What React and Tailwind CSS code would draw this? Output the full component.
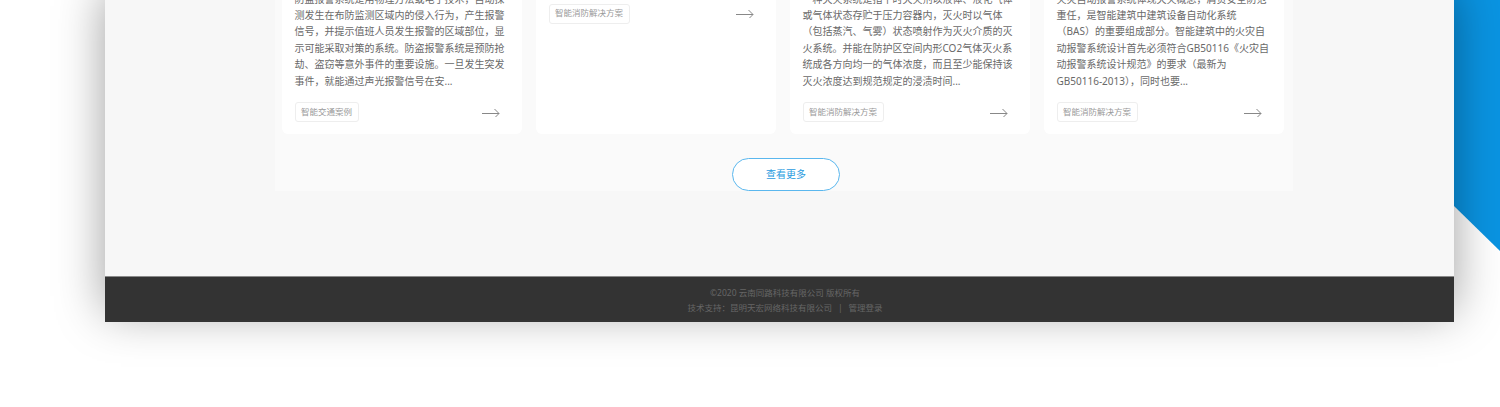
import React from 'react';

const cards = [
  {
    title: '防盗报警系统',
    text: '防盗报警系统是用物理方法或电子技术，自动探测发生在布防监测区域内的侵入行为，产生报警信号，并提示值班人员发生报警的区域部位，显示可能采取对策的系统。防盗报警系统是预防抢劫、盗窃等意外事件的重要设施。一旦发生突发事件，就能通过声光报警信号在安...',
    tag: '智能交通案例',
  },
  { title: '智能消防系统', text: '', tag: '智能消防解决方案' },
  {
    title: '气体灭火系统',
    text: '一种灭火系统是指平时灭火剂以液体、液化气体或气体状态存贮于压力容器内，灭火时以气体（包括蒸汽、气雾）状态喷射作为灭火介质的灭火系统。并能在防护区空间内形CO2气体灭火系统成各方向均一的气体浓度，而且至少能保持该灭火浓度达到规范规定的浸渍时间...',
    tag: '智能消防解决方案',
  },
  {
    title: '火灾自动报警系统',
    text: '火灾自动报警系统体现灭火概念，肩负安全防范\n重任，是智能建筑中建筑设备自动化系统\n（BAS）的重要组成部分。智能建筑中的火灾自\n动报警系统设计首先必须符合GB50116《火灾自\n动报警系统设计规范》的要求（最新为\nGB50116-2013），同时也要...',
    tag: '智能消防解决方案',
  },
];

const ArrowIcon = () => (
  <svg width="18" height="10" viewBox="0 0 18 10" fill="none" stroke="#888" strokeWidth="1">
    <path d="M0 5.5h17" />
    <path d="M12.5 1l4.5 4.5L13.5 9" />
  </svg>
);

const Card = ({ card }) => (
  <div className="bg-white rounded-md px-[12.5px] pb-3 flex flex-col">
    <h4 className="h-[34px] text-[11px] leading-[16.4px] text-[#333] truncate">{card.title}</h4>
    <p className="text-[#696969] text-[10px] leading-[16.4px] whitespace-pre-line">{card.text}</p>
    <div className="mt-[13px] flex items-center justify-between pr-[10px]">
      <span className="h-5 flex items-center px-[5.5px] border border-[#eee] rounded-[3px] text-[8.5px] text-[#999]">
        {card.tag}
      </span>
      <span className="mt-[1px] flex">
        <ArrowIcon />
      </span>
    </div>
  </div>
);

export default function App() {
  return (
    <div
      className="relative h-[407px] w-full overflow-hidden bg-white"
      style={{ fontFamily: '"Noto Sans", "Noto Sans CJK SC", sans-serif' }}
    >
      {/* blue decoration behind the panel */}
      <div className="absolute right-0 top-0 w-[46px] h-[251px] bg-[#0a94e2] [clip-path:polygon(0_0,100%_0,100%_100%,0_206px)]" />

      <div className="relative ml-[105px] w-[1349px] h-[322px] bg-[#f7f7f7] flex flex-col justify-end shadow-[0_-10px_45px_rgba(0,0,0,0.38)]">
        <div className="overflow-hidden flex-1 flex flex-col justify-end">
          <section className="ml-[170px] w-[1018px] bg-[#fafafa] pl-[7px] shrink-0 flex flex-col">
            <div className="grid grid-cols-4 gap-[14px] w-[1002px]">
              {cards.map((card) => (
                <Card key={card.title} card={card} />
              ))}
            </div>
            <button
              type="button"
              className="mt-[24px] ml-[450px] w-[108px] h-[33px] rounded-[17px] border border-[#5ab7ee] bg-white text-[10px] text-[#2a9be0]"
            >
              查看更多
            </button>
          </section>
          <div className="h-[85px] shrink-0" />
        </div>

        <footer className="h-[46px] shrink-0 bg-[#333] border-t border-[#8a8a8a] pl-[11px] pt-[8px] text-center text-[8.5px] leading-[15px] text-[#666]">
          <p>©2020 云南同路科技有限公司 版权所有</p>
          <p>
            技术支持：昆明天宏网络科技有限公司<span className="mx-[6px]">|</span>管理登录
          </p>
        </footer>
      </div>
    </div>
  );
}
